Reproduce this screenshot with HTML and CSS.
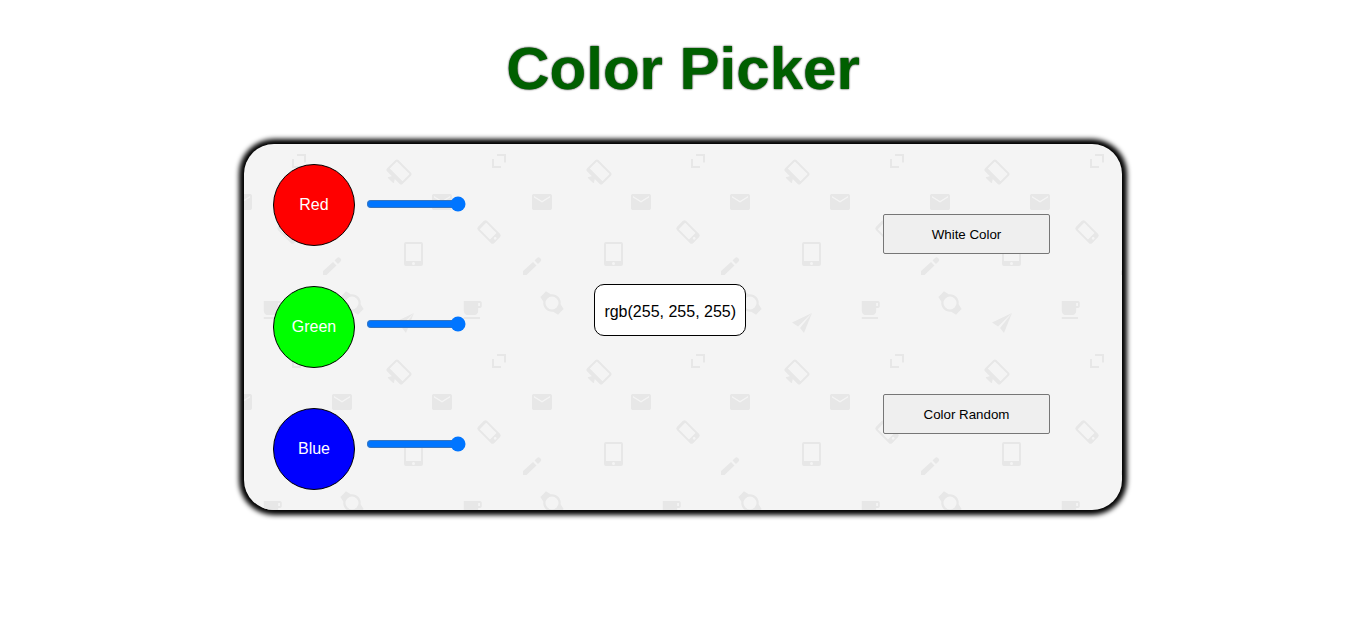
FILE: index.html
```
<!DOCTYPE html>
<html lang="en">
<head>
  <meta charset="utf-8">
  <title>Color Picker</title>
  <link rel="stylesheet" href="styles.css">
</head>
<body>
  <h1 class="title">Color Picker</h1>
  <main class="picker">
    <svg class="backdrop" width="100%" height="100%" aria-hidden="true">
      <defs>
        <path id="mail" d="M20 4H4c-1.100 0-2 .6-2 1.500V18.500c0 .9.9 1.500 2 1.500h16c1.100 0 2-.6 2-1.500V5.500C22 4.600 21.100 4 20 4zm0 3.500l-8 5-8-5V6l8 5 8-5z"/>
        <g id="devices">
          <use href="#mail" x="20" y="46"/>
          <path transform="translate(89 28) rotate(45) translate(-12 -10)" d="M21 2H3c-1.100 0-2 .9-2 2v12c0 1.100.9 2 2 2h7l-2 3v1h8v-1l-2-3h7c1.100 0 2-.9 2-2V4c0-1.100-.9-2-2-2zm0 12H3V4h18z"/>
          <path d="M96 98h15a2 2 0 0 1 2 2v20a2 2 0 0 1-2 2H96a2 2 0 0 1-2-2v-20a2 2 0 0 1 2-2zM96 100v17h15v-17zM103.500 118a1.500 1.500 0 1 0 0 3 1.500 1.500 0 0 0 0-3z"/>
          <path d="M13 131v-4l10-9 3.500 3.500-10 9.500zM24.500 116.500l2.500-2.500q1.500-1.500 3 0l.8.8q1.200 1.200 0 2.500L28 120z"/>
          <path transform="translate(42 159) rotate(-45)" d="M-4-12.500h8l1.200 5.500A8.600 8.600 0 0 1 5.200 7L4 12.500h-8L-5.200 7A8.600 8.600 0 0 1-5.200-7zM0-6.500a6.500 6.500 0 1 0 0 13 6.500 6.500 0 0 0 0-13z"/>
          <path d="M104 169l-20 9.500 6 4zM104 169l-12 15 4 5z"/>
        </g>
        <g id="office">
          <use href="#mail" x="120" y="46"/>
          <path transform="translate(179 88) rotate(-45)" d="M-4-11.500h8a2.500 2.500 0 0 1 2.500 2.500V9a2.500 2.500 0 0 1-2.500 2.500h-8A2.500 2.500 0 0 1-6.500 9V-9a2.500 2.500 0 0 1 2.500-2.500zM-4.500-8.500V6h9V-8.500zM0 7.300a1.400 1.400 0 1 0 0 2.800 1.400 1.400 0 0 0 0-2.800z"/>
          <path d="M187 10h9v8.500h-2V12h-7zM182 15h2v7h7v2h-9z"/>
          <path transform="translate(152 154) scale(.9 1)" d="M20 3H2v10c0 2.200 1.800 4 4 4h8c2.200 0 4-1.800 4-4v-3h2c1.100 0 2-.9 2-2V5c0-1.100-.9-2-2-2zm0 5h-2V5h2zM2 21h18v-2H2z"/>
        </g>
        <pattern id="tile" x="66" width="598" height="200" patternUnits="userSpaceOnUse">
          <g class="motif">
            <use href="#devices"/>
            <use href="#office"/>
            <use href="#devices" x="200"/>
            <use href="#office" x="199"/>
            <use href="#devices" x="398"/>
            <use href="#office" x="398"/>
          </g>
        </pattern>
      </defs>
      <rect width="100%" height="100%" fill="url(#tile)"/>
    </svg>
    <div class="channels">
      <div class="swatches">
        <label class="swatch swatch-red" for="red">Red</label>
        <label class="swatch swatch-green" for="green">Green</label>
        <label class="swatch swatch-blue" for="blue">Blue</label>
      </div>
      <div class="sliders">
        <input class="slider" id="red" type="range" min="0" max="255" value="255">
        <input class="slider" id="green" type="range" min="0" max="255" value="255">
        <input class="slider" id="blue" type="range" min="0" max="255" value="255">
      </div>
    </div>
    <output class="value" for="red green blue">rgb(255, 255, 255)</output>
    <div class="actions">
      <button class="action" type="button">White Color</button>
      <button class="action" type="button">Color Random</button>
    </div>
  </main>
</body>
</html>
```
FILE: styles.css
```
body {
  margin: 0;
  padding: 34px 0 40px 5px;
  background: #fff;
  font-family: "Liberation Sans", Arial, sans-serif;
  font-size: 16px;
}

.title {
  margin: 0 0 40px;
  color: #005f00;
  font-size: 60px;
  line-height: 70px;
  text-align: center;
  text-shadow: 0 0 2px #000;
}

.picker {
  position: relative;
  display: grid;
  grid-template-columns: auto 15fr auto 16fr auto;
  align-items: start;
  box-sizing: border-box;
  width: 64.75%;
  min-width: 640px;
  margin: 0 auto;
  padding: 20px 72px 20px 29px;
  border-radius: 30px;
  background: #f4f4f4;
  box-shadow: 0 0 5px 5px #000;
}

.backdrop {
  position: absolute;
  inset: 0;
  border-radius: 30px;
}

.motif {
  fill: #e7e7e7;
  fill-rule: evenodd;
}

.channels {
  position: relative;
  display: flex;
  gap: 11px;
}

.swatches,
.sliders,
.actions {
  display: flex;
  flex-direction: column;
}

.swatches,
.sliders {
  gap: 40px;
}

.swatch {
  display: flex;
  align-items: center;
  justify-content: center;
  width: 80px;
  height: 80px;
  border: 1px solid #000;
  border-radius: 50%;
  color: #fff;
}

.swatch-red {
  background: #f00;
}

.swatch-green {
  background: #0f0;
}

.swatch-blue {
  background: #00f;
}

.slider {
  width: 100px;
  height: 80px;
  margin: 0;
}

.value {
  position: relative;
  grid-column: 3;
  box-sizing: border-box;
  width: 152px;
  margin-top: 120px;
  padding: 18px 0 14px;
  border: 1px solid #000;
  border-radius: 10px;
  background: #fff;
  line-height: 18px;
  text-align: center;
}

.actions {
  position: relative;
  grid-column: 5;
  gap: 140px;
  margin-top: 50px;
}

.action {
  width: 167px;
  height: 40px;
  border: 1px solid #767676;
  border-radius: 2px;
  background: #efefef;
  color: #000;
  font-family: inherit;
}
```
